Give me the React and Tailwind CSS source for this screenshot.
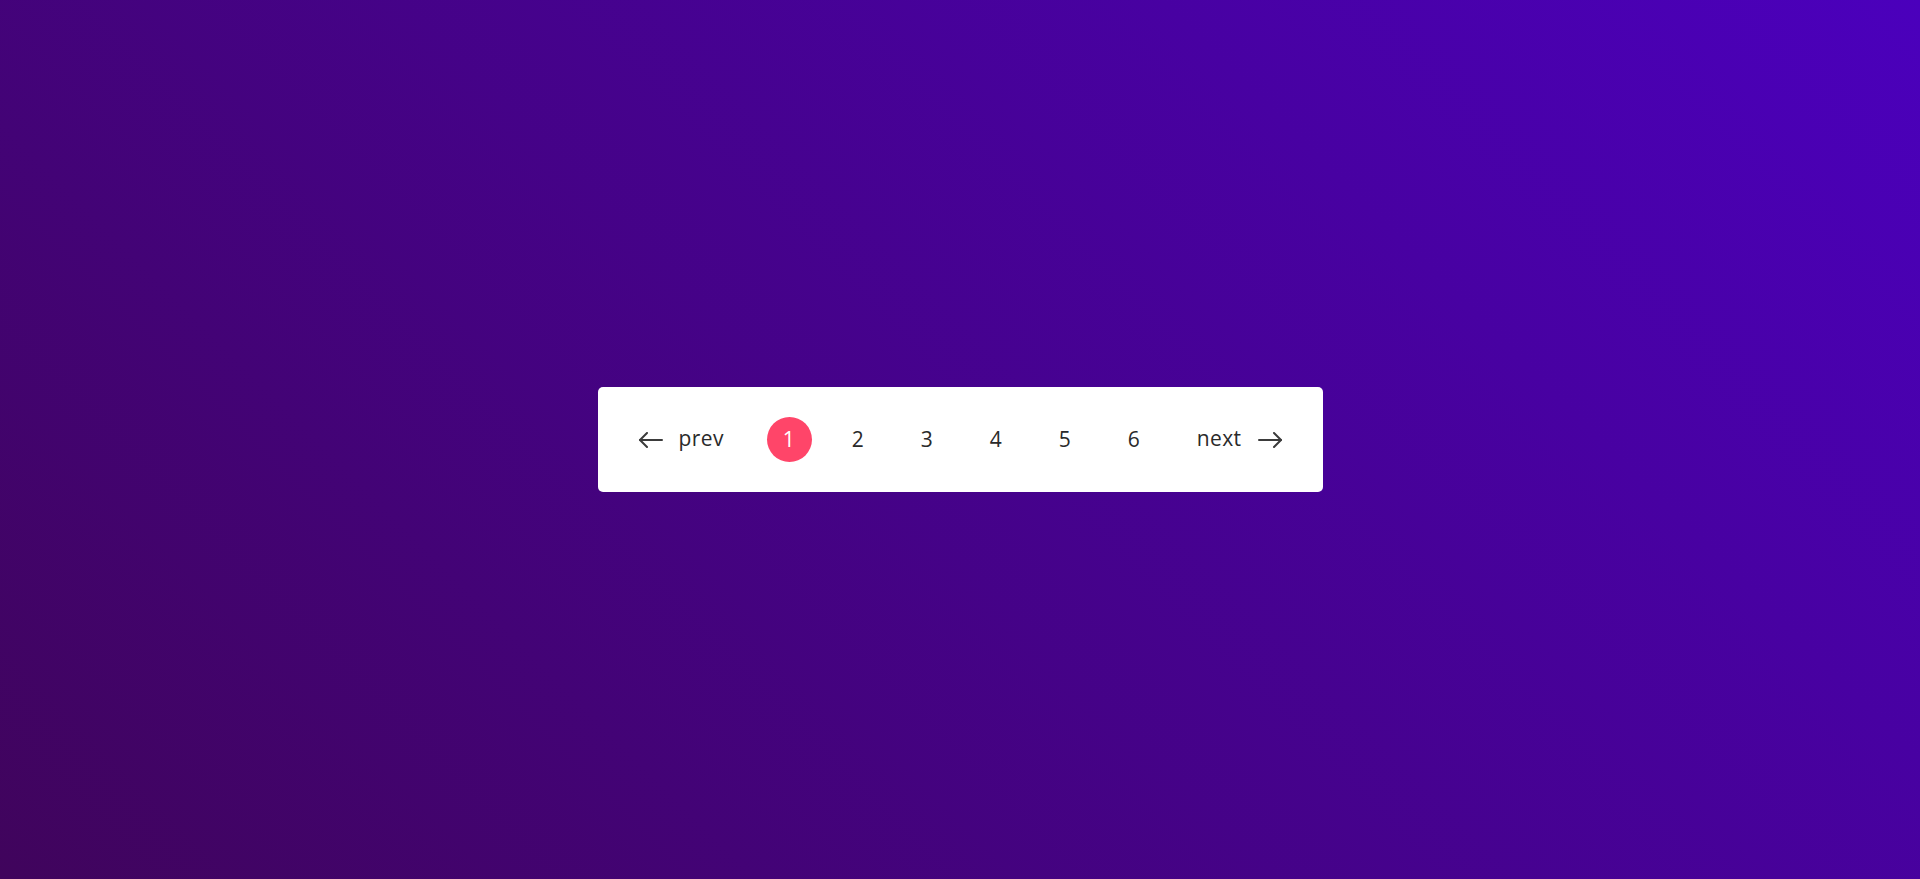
import { useState } from 'react';

function Arrow({ dir }) {
  return (
    <svg width="25" height="16" viewBox="0 0 25 16" fill="none" stroke="#3b3b3b" strokeWidth="2" strokeLinecap="round" strokeLinejoin="round" className={dir === 'right' ? 'rotate-180' : ''}>
      <path d="M2 8h22" />
      <path d="M9 1 2 8l7 7" />
    </svg>
  );
}

export default function App() {
  const [page, setPage] = useState(1);
  const pages = [1, 2, 3, 4, 5, 6];

  return (
    <div
      className="min-h-screen w-full flex items-center justify-center bg-[linear-gradient(45deg,#40045c,#4b00bc)]"
      style={{ fontFamily: '"Open Sans", "Liberation Sans", sans-serif' }}
    >
      <div className="bg-white rounded-[5px] px-10 py-[30px] flex items-center text-[#2a2a2a] text-[21px] tracking-[0.4px] leading-none">
        <button
          onClick={() => setPage(Math.max(1, page - 1))}
          className="flex items-center gap-4 h-[45px] w-[88px]"
        >
          <Arrow dir="left" />
          <span className="pb-[2px]">prev</span>
        </button>

        <div className="flex items-center gap-6 ml-[41px]">
          {pages.map((p) => (
            <button
              key={p}
              onClick={() => setPage(p)}
              className={
                p === page
                  ? 'w-[45px] h-[45px] rounded-full bg-[#ff4569] text-white flex items-center justify-center'
                  : 'w-[45px] h-[45px] rounded-full flex items-center justify-center'
              }
            >
              {p}
            </button>
          ))}
        </div>

        <button
          onClick={() => setPage(Math.min(6, page + 1))}
          className="flex items-center justify-end gap-4 h-[45px] w-[86px] ml-10"
        >
          <span className="pb-[2px]">next</span>
          <Arrow dir="right" />
        </button>
      </div>
    </div>
  );
}
